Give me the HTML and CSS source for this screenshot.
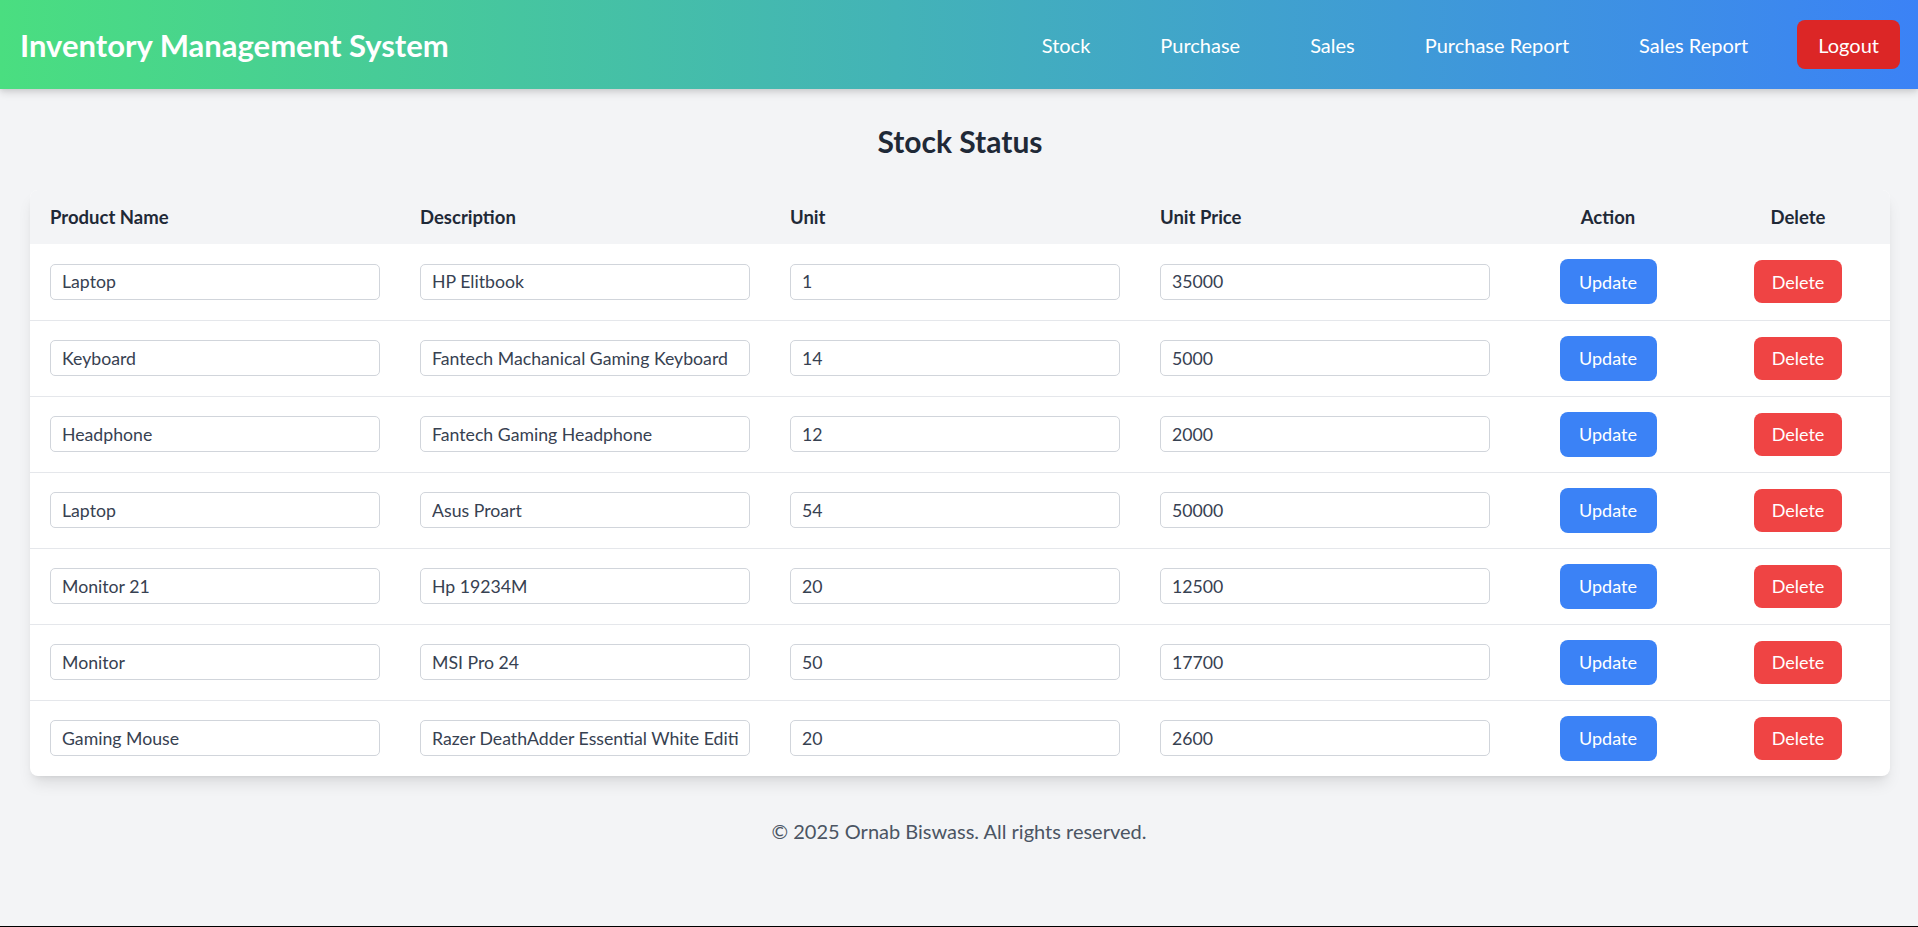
FILE: index.html
```html
<!DOCTYPE html>
<html lang="en">
<head>
<meta charset="utf-8">
<title>Inventory Management System</title>
<link rel="stylesheet" href="styles.css">
</head>
<body>
<div class="page">
  <header class="navbar">
    <h1 class="brand">Inventory Management System</h1>
    <nav class="nav">
      <a class="nav-link" href="#">Stock</a>
      <a class="nav-link" href="#">Purchase</a>
      <a class="nav-link" href="#">Sales</a>
      <a class="nav-link" href="#">Purchase Report</a>
      <a class="nav-link" href="#">Sales Report</a>
      <button class="logout" type="button">Logout</button>
    </nav>
  </header>

  <main class="main">
    <h2 class="page-title">Stock Status</h2>
    <div class="card">
      <table class="stock-table">
        <colgroup>
          <col class="c-name"><col class="c-desc"><col class="c-unit"><col class="c-price"><col class="c-action"><col class="c-delete">
        </colgroup>
        <thead>
          <tr>
            <th>Product Name</th>
            <th>Description</th>
            <th>Unit</th>
            <th>Unit Price</th>
            <th class="center">Action</th>
            <th class="center">Delete</th>
          </tr>
        </thead>
        <tbody>
          <tr>
            <td><input class="field" value="Laptop"></td>
            <td><input class="field" value="HP Elitbook"></td>
            <td><input class="field" value="1"></td>
            <td><input class="field" value="35000"></td>
            <td class="center"><button class="btn btn-update" type="button">Update</button></td>
            <td class="center"><button class="btn btn-delete" type="button">Delete</button></td>
          </tr>
          <tr>
            <td><input class="field" value="Keyboard"></td>
            <td><input class="field" value="Fantech Machanical Gaming Keyboard"></td>
            <td><input class="field" value="14"></td>
            <td><input class="field" value="5000"></td>
            <td class="center"><button class="btn btn-update" type="button">Update</button></td>
            <td class="center"><button class="btn btn-delete" type="button">Delete</button></td>
          </tr>
          <tr>
            <td><input class="field" value="Headphone"></td>
            <td><input class="field" value="Fantech Gaming Headphone"></td>
            <td><input class="field" value="12"></td>
            <td><input class="field" value="2000"></td>
            <td class="center"><button class="btn btn-update" type="button">Update</button></td>
            <td class="center"><button class="btn btn-delete" type="button">Delete</button></td>
          </tr>
          <tr>
            <td><input class="field" value="Laptop"></td>
            <td><input class="field" value="Asus Proart"></td>
            <td><input class="field" value="54"></td>
            <td><input class="field" value="50000"></td>
            <td class="center"><button class="btn btn-update" type="button">Update</button></td>
            <td class="center"><button class="btn btn-delete" type="button">Delete</button></td>
          </tr>
          <tr>
            <td><input class="field" value="Monitor 21"></td>
            <td><input class="field" value="Hp 19234M"></td>
            <td><input class="field" value="20"></td>
            <td><input class="field" value="12500"></td>
            <td class="center"><button class="btn btn-update" type="button">Update</button></td>
            <td class="center"><button class="btn btn-delete" type="button">Delete</button></td>
          </tr>
          <tr>
            <td><input class="field" value="Monitor"></td>
            <td><input class="field" value="MSI Pro 24"></td>
            <td><input class="field" value="50"></td>
            <td><input class="field" value="17700"></td>
            <td class="center"><button class="btn btn-update" type="button">Update</button></td>
            <td class="center"><button class="btn btn-delete" type="button">Delete</button></td>
          </tr>
          <tr>
            <td><input class="field" value="Gaming Mouse"></td>
            <td><input class="field" value="Razer DeathAdder Essential White Edition"></td>
            <td><input class="field" value="20"></td>
            <td><input class="field" value="2600"></td>
            <td class="center"><button class="btn btn-update" type="button">Update</button></td>
            <td class="center"><button class="btn btn-delete" type="button">Delete</button></td>
          </tr>
        </tbody>
      </table>
    </div>
  </main>

  <footer class="footer">© 2025 Ornab Biswass. All rights reserved.</footer>
</div>
</body>
</html>
```

FILE: styles.css
```css
html {
  background: #000;
}
body {
  margin: 0;
  font-family: Lato, "Open Sans", "Liberation Sans", sans-serif;
  color: #1f2937;
}
.page {
  min-height: 926px;
  background: #f3f4f6;
  display: flex;
  flex-direction: column;
}
.navbar {
  height: 89px;
  box-sizing: border-box;
  padding: 0 18px 0 20px;
  display: flex;
  align-items: center;
  justify-content: space-between;
  background: linear-gradient(90deg, #4ade80 0%, #3b82f6 100%);
  box-shadow: 0 4px 8px rgba(0, 0, 0, 0.12), 0 2px 4px rgba(0, 0, 0, 0.06);
}
.brand {
  margin: 0;
  font-size: 31px;
  font-weight: 700;
  color: #fff;
  line-height: 36px;
}
.nav {
  display: flex;
  align-items: center;
}
.nav-link {
  color: #fff;
  text-decoration: none;
  font-size: 20px;
  line-height: 28px;
  margin-right: 70px;
}
.logout {
  height: 49px;
  margin-left: -21px;
  padding: 0 21px;
  border: 0;
  border-radius: 8px;
  background: #dc2626;
  color: #fff;
  font-family: inherit;
  font-size: 20px;
}
.main {
  padding: 0 28px 0 30px;
}
.page-title {
  margin: 34px 0 31px;
  text-align: center;
  font-size: 30px;
  line-height: 36px;
  font-weight: 700;
  color: #1f2937;
}
.card {
  background: #fff;
  border-radius: 8px;
  overflow: hidden;
  box-shadow: 0 10px 15px -3px rgba(0, 0, 0, 0.1), 0 4px 6px -4px rgba(0, 0, 0, 0.1);
}
.stock-table {
  width: 100%;
  border-collapse: collapse;
  table-layout: fixed;
}
.c-name, .c-desc, .c-unit, .c-price { width: 370px; }
.c-action { width: 196px; }
.stock-table thead tr {
  background: #f3f4f6;
}
.stock-table th {
  height: 54px;
  padding: 0 20px;
  text-align: left;
  font-size: 18.5px;
  font-weight: 700;
  color: #1f2937;
  box-sizing: border-box;
}
.stock-table th.center, .stock-table td.center {
  text-align: center;
}
.stock-table tbody tr {
  border-bottom: 1px solid #e5e7eb;
}
.stock-table tbody tr:last-child {
  border-bottom: 0;
}
.stock-table td {
  height: 76px;
  padding: 0 20px;
  box-sizing: border-box;
  vertical-align: middle;
}
.field {
  display: block;
  width: 100%;
  height: 36px;
  box-sizing: border-box;
  padding: 0 11px;
  border: 1px solid #d1d5db;
  border-radius: 5px;
  background: #fff;
  font-family: inherit;
  font-size: 17.7px;
  color: #374151;
}
.btn {
  border: 0;
  color: #fff;
  font-family: inherit;
  font-size: 18px;
  border-radius: 8px;
  vertical-align: middle;
}
.btn-update {
  width: 97px;
  height: 45px;
  background: #3b82f6;
}
.btn-delete {
  width: 88px;
  height: 43px;
  background: #ef4444;
}
.footer {
  margin-top: 41px;
  text-align: center;
  font-size: 20px;
  line-height: 28px;
  color: #4b5563;
}
```
